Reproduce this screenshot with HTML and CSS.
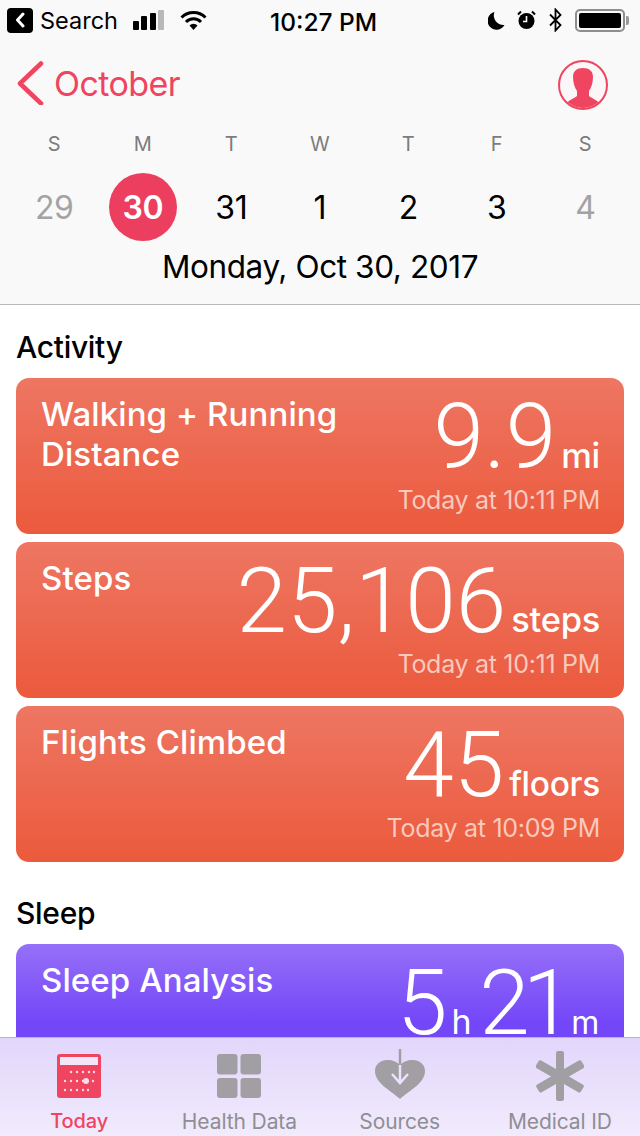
FILE: index.html
```html
<!DOCTYPE html>
<html lang="en">

<head>
    <meta charset="UTF-8">
    <title>Health: Today</title>
    <link rel="stylesheet" href="styles.css">
</head>

<body>
    <div class="screen">
        <header class="top">
            <div class="status">
                <div class="status_left">
                    <span class="back_badge">
                        <svg width="10" height="16" viewBox="0 0 10 16"><path d="M8 2 L2.500 8 L8 14" fill="none" stroke="#fff" stroke-width="3" stroke-linecap="round" stroke-linejoin="round"/></svg>
                    </span>
                    <span class="status_search">Search</span>
                    <span class="bars">
                        <i class="bar bar1"></i><i class="bar bar2"></i><i class="bar bar3"></i><i class="bar bar4"></i>
                    </span>
                    <svg class="wifi" width="27" height="20" viewBox="0 0 27 20">
                        <path d="M1.500 7.500 A17 17 0 0 1 25.500 7.500" fill="none" stroke="#000" stroke-width="3"/>
                        <path d="M6 12 A10.500 10.500 0 0 1 21 12" fill="none" stroke="#000" stroke-width="3"/>
                        <path d="M13.500 20 L9.500 15.500 A5.500 5.500 0 0 1 17.500 15.500 Z" fill="#000"/>
                    </svg>
                </div>
                <div class="status_time">10:27 PM</div>
                <div class="status_right">
                    <svg width="17" height="19" viewBox="0 0 17 19"><path d="M6.500 1 A9 9 0 1 0 16.500 14 A9.500 9.500 0 0 1 6.500 1 Z" fill="#000"/></svg>
                    <svg width="19" height="20" viewBox="0 0 19 20">
                        <circle cx="9.500" cy="11" r="8" fill="#000"/>
                        <path d="M9.500 6 V11.500 H6" fill="none" stroke="#fff" stroke-width="1.600"/>
                        <path d="M1 4.500 L4 1.500 M18 4.500 L15 1.500" stroke="#000" stroke-width="2"/>
                    </svg>
                    <svg width="15" height="24" viewBox="0 0 15 24"><path d="M2 6.500 L12.500 17 L7.500 22.500 V1.500 L12.500 7 L2 17.500" fill="none" stroke="#000" stroke-width="1.800"/></svg>
                    <span class="battery"><i class="battery_fill"></i></span>
                    <i class="battery_tip"></i>
                </div>
            </div>

            <div class="nav">
                <div class="nav_back">
                    <svg width="28" height="44" viewBox="0 0 28 44"><path d="M25 2.500 L4 22.500 L25 42.500" fill="none" stroke="#ef4560" stroke-width="4.500" stroke-linecap="round" stroke-linejoin="round"/></svg>
                    <span class="nav_month">October</span>
                </div>
                <svg class="avatar" width="50" height="50" viewBox="0 0 50 50">
                    <clipPath id="avatar_clip"><circle cx="25" cy="25" r="23"/></clipPath>
                    <circle cx="25" cy="25" r="24" fill="#fbf6f7" stroke="#ef4560" stroke-width="2"/>
                    <path clip-path="url(#avatar_clip)" d="M25 8 C31 8 35 11 35 17 C35 23 33 28 31 31 V36 C34 39 42 40 44 48 V50 H6 V48 C8 40 16 39 19 36 V31 C17 28 15 23 15 17 C15 11 19 8 25 8 Z" fill="#ef4560"/>
                </svg>
            </div>

            <div class="week">
                <div class="day"><span class="day_name">S</span><span class="day_num day_off">29</span></div>
                <div class="day"><span class="day_name">M</span><span class="day_num day_sel">30</span></div>
                <div class="day"><span class="day_name">T</span><span class="day_num">31</span></div>
                <div class="day"><span class="day_name">W</span><span class="day_num">1</span></div>
                <div class="day"><span class="day_name">T</span><span class="day_num">2</span></div>
                <div class="day"><span class="day_name">F</span><span class="day_num">3</span></div>
                <div class="day"><span class="day_name">S</span><span class="day_num day_off">4</span></div>
            </div>
            <div class="date_full">Monday, Oct 30, 2017</div>
        </header>

        <main class="content">
            <h2>Activity</h2>

            <div class="card card_red">
                <div class="card_title">Walking + Running Distance</div>
                <div class="card_right">
                    <div class="card_value"><span class="num">9.9</span><span class="unit">mi</span></div>
                    <div class="card_time">Today at 10:11 PM</div>
                </div>
            </div>

            <div class="card card_red">
                <div class="card_title">Steps</div>
                <div class="card_right">
                    <div class="card_value"><span class="num">25,106</span><span class="unit">steps</span></div>
                    <div class="card_time">Today at 10:11 PM</div>
                </div>
            </div>

            <div class="card card_red">
                <div class="card_title">Flights Climbed</div>
                <div class="card_right">
                    <div class="card_value"><span class="num">45</span><span class="unit unit_floors">floors</span></div>
                    <div class="card_time">Today at 10:09 PM</div>
                </div>
            </div>

            <h2 class="h_sleep">Sleep</h2>

            <div class="card card_purple">
                <div class="card_title">Sleep Analysis</div>
                <div class="card_right">
                    <div class="card_value"><span class="num">5</span><span class="unit unit_thin">h</span><span class="num num_next">21</span><span class="unit unit_thin unit_last">m</span></div>
                </div>
            </div>
        </main>

        <nav class="tabs">
            <div class="tab tab_on">
                <svg width="44" height="44" viewBox="0 0 44 44">
                    <rect width="44" height="44" rx="3" fill="#ef4560"/>
                    <rect x="3" y="3" width="38" height="8" fill="#f3e6f6"/>
                    <g fill="#f6dfe8">
                        <circle cx="14" cy="18" r="1.200"/><circle cx="20" cy="18" r="1.200"/><circle cx="26" cy="18" r="1.200"/><circle cx="32" cy="18" r="1.200"/><circle cx="37" cy="18" r="1.200"/>
                        <circle cx="8" cy="27" r="1.200"/><circle cx="14" cy="27" r="1.200"/><circle cx="20" cy="27" r="1.200"/><circle cx="26" cy="27" r="1.200"/><circle cx="29" cy="27" r="3"/><circle cx="36" cy="27" r="1.200"/>
                        <circle cx="8" cy="36" r="1.200"/><circle cx="14" cy="36" r="1.200"/><circle cx="20" cy="36" r="1.200"/><circle cx="26" cy="36" r="1.200"/><circle cx="31" cy="36" r="1.200"/>
                    </g>
                </svg>
                <span>Today</span>
            </div>
            <div class="tab">
                <svg width="44" height="44" viewBox="0 0 44 44">
                    <rect width="20.500" height="20.500" rx="3" fill="#a19fa3"/>
                    <rect x="23.500" width="20.500" height="20.500" rx="3" fill="#a19fa3"/>
                    <rect y="24" width="20.500" height="20" rx="3" fill="#a19fa3"/>
                    <rect x="23.500" y="24" width="20.500" height="20" rx="3" fill="#a19fa3"/>
                </svg>
                <span>Health Data</span>
            </div>
            <div class="tab">
                <svg class="tab_icon_tall" width="50" height="50" viewBox="0 0 50 50">
                    <path d="M25 50 C15 41 0 34 0 22 C0 15 6 11 12 11 C18 11 22 13 25 16 C28 13 32 11 38 11 C44 11 50 15 50 22 C50 34 35 41 25 50 Z" fill="#a19fa3"/>
                    <path d="M25 0 V16" stroke="#a19fa3" stroke-width="2.500" fill="none"/>
                    <path d="M25 16 V34 M17 25 L25 34 L33 25" stroke="#ece2fb" stroke-width="2.500" fill="none"/>
                </svg>
                <span>Sources</span>
            </div>
            <div class="tab">
                <svg class="tab_icon_star" width="48" height="50" viewBox="0 0 48 50">
                    <g fill="#a19fa3">
                        <rect x="20" y="0" width="8" height="50" rx="2"/>
                        <rect x="20" y="-1" width="9" height="52" rx="2" transform="rotate(60 24 25)"/>
                        <rect x="19" y="-1" width="9" height="52" rx="2" transform="rotate(-60 24 25)"/>
                    </g>
                </svg>
                <span>Medical ID</span>
            </div>
        </nav>
    </div>
</body>

</html>
```

FILE: styles.css
```css
* {
    margin: 0;
    padding: 0;
    box-sizing: border-box;
}

body {
    font-family: Inter, "Noto Sans", sans-serif;
    background: #fff;
}

.screen {
    position: relative;
    width: 640px;
    height: 1136px;
    overflow: hidden;
}

.top {
    height: 305px;
    background: #f9f9f9;
    border-bottom: 1px solid #b9b9bb;
}

.status {
    height: 40px;
    padding: 0 0 0 7px;
    display: flex;
    align-items: center;
    position: relative;
}

.status_left {
    display: flex;
    align-items: center;
}

.back_badge {
    width: 26px;
    height: 25px;
    background: #000;
    border-radius: 4px;
    display: flex;
    align-items: center;
    justify-content: center;
}

.status_search {
    margin-left: 7px;
    font-size: 23.500px;
}

.bars {
    margin-left: 15px;
    display: flex;
    align-items: flex-end;
    gap: 2.500px;
}

.bar {
    display: block;
    width: 6px;
    border-radius: 1px;
    background: #000;
}

.bar1 { height: 9px; }
.bar2 { height: 14px; }
.bar3 { height: 17px; }
.bar4 { height: 20px; background: #b8b8b8; }

.wifi {
    margin-left: 16px;
}

.status_time {
    position: absolute;
    left: 270px;
    top: 7px;
    font-size: 24.500px;
    font-weight: 500;
}

.status_right {
    position: absolute;
    right: 0;
    top: 8px;
    display: flex;
    align-items: center;
}

.status_right svg {
    margin-right: 12px;
}

.battery {
    width: 50px;
    height: 23px;
    border: 2px solid #8e8e8e;
    border-radius: 5px;
    padding: 2px;
}

.battery_fill {
    display: block;
    height: 100%;
    background: #000;
    border-radius: 2px;
}

.battery_tip {
    display: block;
    width: 3px;
    height: 9px;
    margin: 0 11px 0 1px;
    background: #9a9a9a;
    border-radius: 0 2px 2px 0;
}

.nav {
    height: 80px;
    padding: 0 32px 0 16px;
    display: flex;
    align-items: center;
    justify-content: space-between;
}

.nav_back {
    display: flex;
    align-items: center;
    padding-top: 6px;
}

.nav_month {
    margin-left: 10px;
    font-size: 34px;
    color: #ef4560;
    letter-spacing: -0.6px;
}

.avatar {
    margin-top: 9px;
}

.week {
    padding: 0 10px;
    display: grid;
    grid-template-columns: repeat(7, 88.500px);
}

.day {
    display: flex;
    flex-direction: column;
    align-items: center;
}

.day_name {
    margin-top: 2px;
    height: 40px;
    font-size: 20px;
    line-height: 44px;
    color: #7c7c7e;
}

.day_num {
    width: 68px;
    height: 68px;
    margin-top: 11px;
    border-radius: 50%;
    font-size: 32px;
    line-height: 70px;
    text-align: center;
    color: #000;
    letter-spacing: -0.5px;
}

.day_off {
    color: #a3a3a5;
}

.day_sel {
    background: #ec3f5f;
    color: #fff;
    font-weight: 600;
}

.date_full {
    margin-top: 6px;
    text-align: center;
    font-size: 31.500px;
    letter-spacing: -0.4px;
    color: #000;
}

.content {
    padding: 0 16px;
}

h2 {
    font-size: 30px;
    font-weight: 500;
    line-height: 36px;
    padding-top: 24px;
    height: 73px;
    color: #000;
    letter-spacing: -0.3px;
}

.h_sleep {
    margin-top: 8px;
    height: 74px;
    padding-top: 25px;
}

.card {
    height: 156px;
    margin-bottom: 8px;
    padding: 16px 24px 16px 25px;
    border-radius: 13px;
    display: flex;
    justify-content: space-between;
    color: #fff;
}

.card_red {
    background: linear-gradient(#ee7662, #eb5a3d);
}

.card_purple {
    background: linear-gradient(#9670f8, #7347f8 50%);
}

.card_title {
    max-width: 310px;
    font-size: 33px;
    font-weight: 500;
    line-height: 40px;
    letter-spacing: 0.1px;
}

.card_right {
    text-align: right;
    display: flex;
    flex-direction: column;
    align-items: flex-end;
}

.card_value {
    height: 91px;
    padding-top: 4px;
    display: flex;
    align-items: baseline;
    justify-content: flex-end;
}

.num {
    font-family: Roboto, sans-serif;
    font-size: 91px;
    font-weight: 300;
    line-height: 78px;
}

.num_next {
    margin-left: 8px;
    letter-spacing: -7px;
}

.unit {
    margin-left: 5px;
    font-size: 34.500px;
    font-weight: 500;
    letter-spacing: -0.3px;
}

.unit_floors {
    font-size: 33.500px;
}

.unit_thin {
    margin-left: 4px;
    font-size: 34px;
    font-weight: 400;
}

.unit_last {
    margin-left: 5px;
    margin-right: 1px;
    font-size: 32px;
}

.card_time {
    margin-top: 0;
    font-size: 25px;
    line-height: 30px;
    color: #f9c9bd;
    letter-spacing: -0.3px;
}

.tabs {
    position: absolute;
    left: 0;
    right: 0;
    bottom: 0;
    height: 99px;
    border-top: 1px solid #b9b3c6;
    background: linear-gradient(#e2d6fb, #f1ebfd);
    display: flex;
}

.tab {
    position: relative;
    flex: 1;
    display: flex;
    flex-direction: column;
    align-items: center;
    padding-top: 16px;
    color: #8e8e93;
    font-size: 21px;
    letter-spacing: -0.1px;
}

.tab span {
    position: absolute;
    top: 71px;
    white-space: nowrap;
}

.tab_on {
    margin-left: -1px;
    color: #ef4560;
    font-size: 20px;
    font-weight: 500;
}

.tab_icon_tall {
    margin-top: -5px;
}

.tab_icon_star {
    margin-top: -3px;
}
```
